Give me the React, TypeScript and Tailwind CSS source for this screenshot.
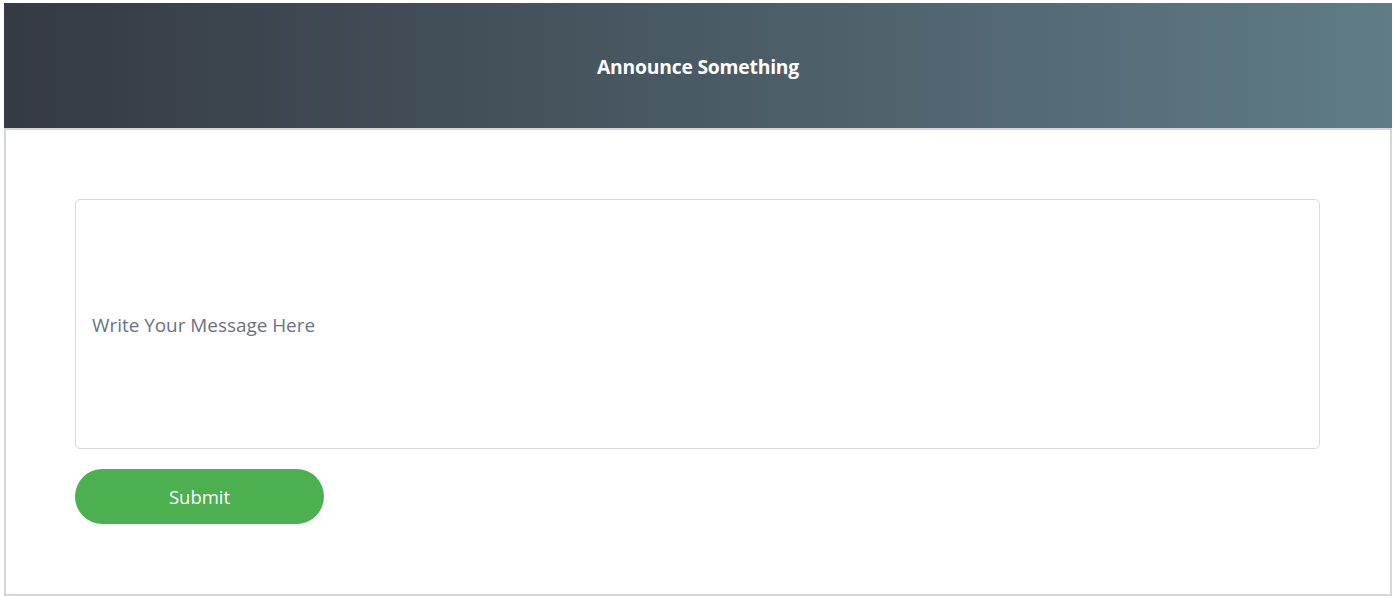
import React from "react";

export default function App() {
  return (
    <div className="w-[1393px] h-[596px] bg-white pt-[3px] pl-[4px] pr-[1px]" style={{ fontFamily: '"Open Sans", "Noto Sans", sans-serif' }}>
      <div className="flex flex-col h-[593px]">
        <div className="h-[122px] flex items-center justify-center bg-gradient-to-r from-[#353a43] to-[#5f7c87] border-b-2 border-[#d3d6dc] box-content pt-[3px]">
          <h1 className="text-white font-bold text-[19.3px] tracking-[-0.2px]">Announce Something</h1>
        </div>
        <div className="flex-1 border-x-2 border-b-2 border-[#d3d6dc] pl-[69px] pr-[70px] pt-[69px]">
          <div className="h-[250px] rounded-[5px] border border-[#d7dade] flex items-center pl-[16px] pt-[3px]">
            <span className="text-[18.9px] text-[#6b7280]">Write Your Message Here</span>
          </div>
          <button className="mt-[20px] w-[249px] h-[55px] rounded-full bg-[#4caf50] text-white text-[18.5px] flex items-center justify-center pt-[1px]">
            Submit
          </button>
        </div>
      </div>
    </div>
  );
}
